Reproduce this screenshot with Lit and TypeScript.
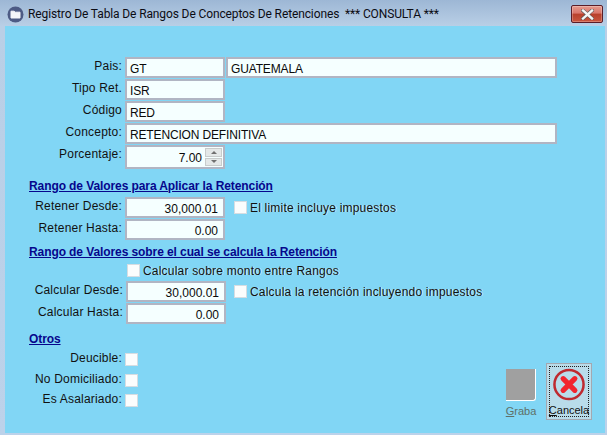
import { LitElement, html, css } from "lit";
import { customElement } from "lit/decorators.js";

@customElement("app-root")
export class AppRoot extends LitElement {
  static styles = css`
    :host { display: block; width: 607px; height: 435px; overflow: hidden; font-family: "Liberation Sans", Arial, sans-serif; font-size: 12px; color: #111; }
    * { box-sizing: border-box; }
    .window { width: 607px; height: 435px; display: flex; flex-direction: column; background: linear-gradient(180deg, #9db7d5 0, #b9cfe6 26px, #bcd2ea 100%); }
    .titlebar { height: 26px; flex: none; display: flex; align-items: center; padding: 0 4px 0 7px; }
    .app-icon { width: 17px; height: 17px; flex: none; margin: 2px 4px 0 0; }
    .title { font-family: Roboto, "Noto Sans", sans-serif; font-size: 12px; color: #0c0c14; white-space: pre; flex: 1; letter-spacing: -0.12px; padding-top: 2px; }
    .close { width: 32px; height: 18px; margin-top: 2px; flex: none; border: 1px solid #5a1d28; border-radius: 2px; background: linear-gradient(180deg, #e59a8d 0, #d9756a 45%, #b8402b 50%, #c9563f 100%); display: flex; align-items: center; justify-content: center; box-shadow: inset 0 0 0 1px rgba(255,255,255,.25); }
    .client { flex: 1; margin: 0 2px 2px 5px; background: #81d6f5; padding-top: 31px; display: flex; flex-direction: column; }
    .row { display: flex; align-items: flex-start; height: 21px; margin-bottom: 1px; }
    .lab { width: 117px; margin-right: 3px; text-align: right; line-height: 15px; padding-top: 2px; letter-spacing: 0.2px; white-space: nowrap; }
    .wide .lab { width: 118px; }
    .field { height: 21px; border: 2px solid #b1b5c3; background: #f5ffff; line-height: 18px; padding: 1px 3px 0 3px; white-space: nowrap; color: #0a0a0a; letter-spacing: -0.15px; }
    .w100 { width: 100px; }
    .w331 { width: 331px; margin-left: 1px; }
    .w432 { width: 432px; }
    .num { text-align: right; padding-right: 5px; letter-spacing: 0; }
    .spin { width: 100px; height: 24px; position: relative; padding-top: 2px; padding-right: 21px; }
    .row.tall { height: 24px; margin-bottom: 0; }
    .spinbtns { position: absolute; right: 1px; top: 1px; width: 17px; height: 18px; display: flex; flex-direction: column; gap: 1px; }
    .spinbtn { flex: 1; background: #e4e8e8; border: 1px solid #c8cccc; display: flex; align-items: center; justify-content: center; }
    .arrow-up { width: 0; height: 0; border-left: 3px solid transparent; border-right: 3px solid transparent; border-bottom: 3px solid #707070; }
    .arrow-down { width: 0; height: 0; border-left: 3px solid transparent; border-right: 3px solid transparent; border-top: 3px solid #707070; }
    .heading { margin-left: 24px; font-weight: bold; color: #06068c; text-decoration: underline; line-height: 15px; height: 15px; letter-spacing: -0.09px; white-space: nowrap; }
    .h1 { margin-top: 10px; margin-bottom: 3px; }
    .h2 { margin-top: 4px; margin-bottom: 3px; }
    .h3 { margin-top: 7px; margin-bottom: 5px; }
    .box { width: 13px; height: 13px; flex: none; background: #fbfdfd; border: 1px solid #d6dde2; }
    .check { display: flex; align-items: center; margin-left: 9px; height: 21px; white-space: nowrap; letter-spacing: 0.2px; }
    .check.near { margin-left: 8px; }
    .check .box { margin-right: 3px; }
    .solo { margin-left: 122px; height: 15px; margin-bottom: 3px; display: flex; align-items: center; white-space: nowrap; letter-spacing: 0.2px; }
    .solo .box { margin-right: 3px; }
    .halo { text-shadow: 1px 0 0 rgba(255,255,255,.55); }
    .bottom { flex: 1; display: flex; justify-content: space-between; align-items: flex-start; }
    .otros { display: flex; flex-direction: column; }
    .crow { display: flex; align-items: flex-start; height: 20.5px; }
    .crow .lab { margin-right: 3px; padding-top: 0; margin-top: -1px; }
    .crow .box { margin-top: 1px; }
    .actions { align-self: flex-end; display: flex; align-items: flex-start; gap: 10px; padding: 0 13px 13px 0; }
    .act { display: flex; flex-direction: column; align-items: center; font-size: 11px; line-height: 12px; }
    .graba { margin-top: 6px; width: 30px; color: #5f7068; }
    .gicon { width: 30px; height: 32px; background: #a0a0a0; border-right: 1px solid #fff; border-bottom: 1px solid #fff; border-radius: 0 0 3px 0; margin-bottom: 4px; }
    .cancela { width: 46px; height: 57px; background: #b9dcea; border: 1px solid #a4a8b0; padding: 2px; }
    .focus { width: 100%; height: 100%; border: 1px dotted #222; display: flex; flex-direction: column; align-items: center; padding-top: 1px; gap: 3px; color: #111; }
    u { text-decoration: underline; }
  `;

  render() {
    return html`<div class="window">
      <div class="titlebar">
        <svg class="app-icon" viewBox="0 0 17 17"><circle cx="8.5" cy="8.5" r="8" fill="#4d5b85"/><path d="M4 5.2h3.2l1 1H13v5.8H4z" fill="#f4f6fa" stroke="#f4f6fa" stroke-linejoin="round"/></svg>
        <div class="title">Registro De Tabla De Rangos De Conceptos De Retenciones  *** CONSULTA ***</div>
        <div class="close"><svg width="13" height="11" viewBox="0 0 13 11"><path d="M2 1.5 L11 9.5 M11 1.5 L2 9.5" stroke="#555" stroke-width="3.6" stroke-linecap="square"/><path d="M2 1.5 L11 9.5 M11 1.5 L2 9.5" stroke="#f6f6f6" stroke-width="2.4" stroke-linecap="square"/></svg></div>
      </div>
      <div class="client">
        <div class="row"><div class="lab">Pais:</div><div class="field w100">GT</div><div class="field w331">GUATEMALA</div></div>
        <div class="row"><div class="lab">Tipo Ret.</div><div class="field w100">ISR</div></div>
        <div class="row"><div class="lab">Código</div><div class="field w100">RED</div></div>
        <div class="row"><div class="lab">Concepto:</div><div class="field w432">RETENCION DEFINITIVA</div></div>
        <div class="row tall"><div class="lab">Porcentaje:</div><div class="field spin num">7.00<div class="spinbtns"><div class="spinbtn"><div class="arrow-up"></div></div><div class="spinbtn"><div class="arrow-down"></div></div></div></div></div>

        <div class="heading h1">Rango de Valores para Aplicar la Retención</div>
        <div class="row"><div class="lab">Retener Desde:</div><div class="field w100 num">30,000.01</div><div class="check halo"><div class="box"></div>El limite incluye impuestos</div></div>
        <div class="row"><div class="lab">Retener Hasta:</div><div class="field w100 num">0.00</div></div>

        <div class="heading h2">Rango de Valores sobre el cual se calcula la Retención</div>
        <div class="solo halo"><div class="box"></div>Calcular sobre monto entre Rangos</div>
        <div class="row wide"><div class="lab">Calcular Desde:</div><div class="field w100 num">30,000.01</div><div class="check near halo"><div class="box"></div>Calcula la retención incluyendo impuestos</div></div>
        <div class="row wide"><div class="lab">Calcular Hasta:</div><div class="field w100 num">0.00</div></div>

        <div class="bottom">
          <div class="otros">
            <div class="heading h3">Otros</div>
            <div class="crow"><div class="lab">Deucible:</div><div class="box"></div></div>
            <div class="crow"><div class="lab">No Domiciliado:</div><div class="box"></div></div>
            <div class="crow"><div class="lab">Es Asalariado:</div><div class="box"></div></div>
          </div>
          <div class="actions">
            <div class="act graba"><div class="gicon"></div><span><u>G</u>raba</span></div>
            <div class="act cancela"><div class="focus">
              <svg width="34" height="34" viewBox="0 0 34 34"><circle cx="17" cy="17" r="15" fill="#b9dcea" stroke="#bf2a30" stroke-width="2.6"/><path d="M11 11 L23 23 M23 11 L11 23" stroke="#f2252e" stroke-width="5.4" stroke-linecap="round"/></svg>
              <span><u>C</u>ancela</span>
            </div></div>
          </div>
        </div>
      </div>
    </div>`;
  }
}
